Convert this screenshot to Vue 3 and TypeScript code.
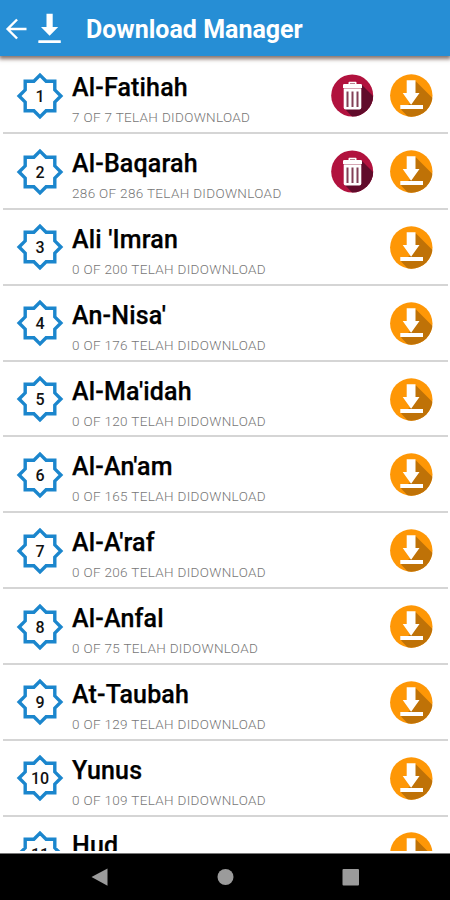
<script setup lang="ts">
interface Surah {
  id: number
  name: string
  done: number
  total: number
}

const surahs: Surah[] = [
  { id: 1, name: 'Al-Fatihah', done: 7, total: 7 },
  { id: 2, name: 'Al-Baqarah', done: 286, total: 286 },
  { id: 3, name: "Ali 'Imran", done: 0, total: 200 },
  { id: 4, name: "An-Nisa'", done: 0, total: 176 },
  { id: 5, name: "Al-Ma'idah", done: 0, total: 120 },
  { id: 6, name: "Al-An'am", done: 0, total: 165 },
  { id: 7, name: "Al-A'raf", done: 0, total: 206 },
  { id: 8, name: 'Al-Anfal', done: 0, total: 75 },
  { id: 9, name: 'At-Taubah', done: 0, total: 129 },
  { id: 10, name: 'Yunus', done: 0, total: 109 },
  { id: 11, name: 'Hud', done: 0, total: 0 },
]
</script>

<template>
  <div class="screen">
    <header class="bar">
      <svg class="back" width="22" height="22" viewBox="0 0 22 22">
        <path d="M21.500 11H2.500M12.100 1.500L2.600 11l9.500 9.500" fill="none" stroke="#fff" stroke-width="2.400" />
      </svg>
      <svg class="logo" width="24" height="32" viewBox="0 0 24 32">
        <path d="M9.500 0.800h6.200v13.200h5.500L12.600 22.800 4 14h5.500z" fill="#fff" />
        <rect x="1.300" y="27.300" width="22.500" height="2.800" rx="0.500" fill="#fff" />
      </svg>
      <h1 class="title">Download Manager</h1>
    </header>

    <main class="list">
      <div v-for="s in surahs" :key="s.id" class="row">
        <div class="badge">
          <svg class="star" width="48" height="48" viewBox="-24 -24 48 48">
            <path
              d="M0-20.900L6.100-14.800H14.800V-6.100L20.900 0 14.800 6.100V14.800H6.100L0 20.900-6.100 14.800H-14.800V6.100L-20.900 0-14.800-6.100V-14.800H-6.100Z"
              fill="none" stroke="#1b86cd" stroke-width="3.400" stroke-miterlimit="8"
            />
          </svg>
          <span class="num">{{ s.id }}</span>
        </div>
        <div class="info">
          <div class="name">{{ s.name }}</div>
          <div v-if="s.total > 0" class="status">{{ s.done }} OF {{ s.total }} TELAH DIDOWNLOAD</div>
          <div v-else class="status"></div>
        </div>
        <div class="actions">
          <svg v-if="s.done > 0" width="43" height="43" viewBox="0 0 43 43">
            <defs>
              <clipPath :id="'trash' + s.id"><circle cx="21.200" cy="21.500" r="21" /></clipPath>
            </defs>
            <g :clip-path="'url(#trash' + s.id + ')'">
              <rect width="43" height="43" fill="#b1123e" />
              <path d="M30 10L47 27V50H28L14 35z" fill="#610b2b" />
            </g>
            <path d="M17.500 10V8.500q0-.8.8-.8h6.400q.8 0 .8.800V10h4.300q1.200 0 1.200 1.200V14H12v-2.800q0-1.200 1.200-1.200z" fill="#fff" />
            <path d="M19 9h5v1h-5z" fill="#b78391" />
            <path d="M12.700 15h17.600v18.500q0 2-2 2H14.700q-2 0-2-2z" fill="#fff" />
            <path d="M12.700 14.500h17.600" stroke="#d6a6b4" />
            <path d="M16.500 17.500v15.500M21.500 17.500v15.500M26.500 17.500v15.500" stroke="#824057" stroke-width="2" />
          </svg>
          <svg width="43" height="43" viewBox="0 0 43 43">
            <defs>
              <clipPath :id="'get' + s.id"><circle cx="21.300" cy="21.500" r="21.200" /></clipPath>
            </defs>
            <g :clip-path="'url(#get' + s.id + ')'">
              <rect width="43" height="43" fill="#fe9706" />
              <path d="M25.500 7L50 31.500V50H25L11 35.500 21 29z" fill="#bf7207" />
            </g>
            <path d="M16.700 6.200h8.800v12.800h4L21.100 30.700 12.700 19h4z" fill="#fff" />
            <rect x="10.300" y="31" width="22.700" height="4" fill="#fff" />
          </svg>
        </div>
      </div>
    </main>

    <footer class="nav">
      <svg width="450" height="46" viewBox="0 0 450 46">
        <path d="M91.500 23L107.500 14.500V31.800z" fill="#9b9b9b" />
        <circle cx="225.500" cy="23" r="8" fill="#9b9b9b" />
        <rect x="342.500" y="15" width="16.500" height="16.500" rx="1" fill="#9b9b9b" />
      </svg>
    </footer>
  </div>
</template>

<style>
body {
  margin: 0;
}
</style>

<style scoped>
.screen {
  width: 450px;
  height: 900px;
  display: flex;
  flex-direction: column;
  overflow: hidden;
  background: #fff;
  font-family: Roboto, "Liberation Sans", sans-serif;
}
.bar {
  box-sizing: border-box;
  flex: none;
  height: 56px;
  display: flex;
  align-items: center;
  padding: 1px 0 0 5px;
  background: #268ed5;
  box-shadow: 0 2px 4px 1px #563c32b8;
  z-index: 1;
}
.back {
  margin-top: 1px;
}
.logo {
  margin-left: 10px;
}
.title {
  margin: 2px 0 0 25px;
  font-size: 25px;
  line-height: 30px;
  font-weight: 700;
  color: #fff;
  white-space: nowrap;
}
.list {
  flex: none;
  box-sizing: border-box;
  height: 795px;
  margin-bottom: 2px;
  padding-top: 2.300px;
  overflow: hidden;
}
.row {
  box-sizing: border-box;
  height: 75.830px;
  margin: 0 2px 0 3px;
  padding-right: 15.500px;
  display: flex;
  align-items: center;
  border-bottom: 2px solid #d5d5d5;
}
.badge {
  display: grid;
  place-items: center;
  width: 48px;
  height: 48px;
  margin: 1px 0 0 13px;
}
.star,
.num {
  grid-area: 1 / 1;
}
.num {
  margin-top: 2px;
  font-size: 16px;
  line-height: 20px;
  font-weight: 500;
  color: #111;
}
.info {
  flex: 1;
  margin-left: 8px;
  padding-top: 8px;
  white-space: nowrap;
}
.name {
  font-size: 25px;
  line-height: 30px;
  font-weight: 500;
  letter-spacing: 0.160px;
  color: #000;
  -webkit-text-stroke: 0.250px #000;
}
.status {
  height: 16px;
  margin-top: 6px;
  font-size: 13.500px;
  line-height: 16px;
  font-weight: 300;
  letter-spacing: 0.330px;
  color: #777;
}
.actions {
  display: flex;
  gap: 16px;
  margin-top: 1px;
}
.nav {
  flex: none;
  box-sizing: border-box;
  height: 47px;
  border-top: 1px solid #777;
  background: #000;
}
.nav svg {
  display: block;
}
</style>
